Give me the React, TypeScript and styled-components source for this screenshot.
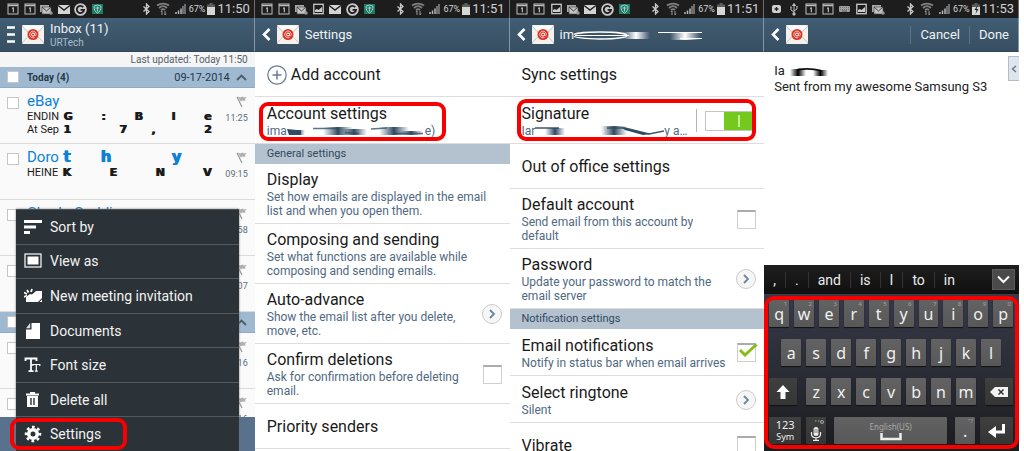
import React from "react";
import styled, { createGlobalStyle } from "styled-components";

const GlobalStyle = createGlobalStyle`
  *, *::before, *::after { box-sizing: border-box; }
  body { margin: 0; background: #fff; font-family: Roboto, "Liberation Sans", sans-serif; color: #1a1a1a; }
  button, input, textarea { font: inherit; color: inherit; margin: 0; }
  button { border: 0; padding: 0; background: none; text-align: left; }
  h1, h2, p { margin: 0; font-weight: 400; }
  svg { display: block; flex: none; }
`;

/* ---------- shell ---------- */

const Board = styled.main`
  display: grid;
  grid-template-columns: repeat(4, minmax(0, 1fr));
  height: 100vh;
  padding-right: 5px;
  overflow: hidden;
`;

const Phone = styled.section`
  position: relative;
  display: flex;
  flex-direction: column;
  min-height: 0;
  overflow: hidden;
  background: #fff;
`;

const Status = styled.div`
  flex: none;
  display: flex;
  align-items: center;
  height: 18px;
  padding: 0 4px;
  background: #1d1d1d;
  border-right: 1px solid #6d6d6d;
  color: #d2d2d2;
`;

const Slot = styled.span<{ $narrow?: boolean }>`
  display: flex;
  justify-content: center;
  width: ${(p) => (p.$narrow ? 12 : 17)}px;
`;

const StatusEnd = styled.div`
  display: flex;
  align-items: center;
  margin-left: auto;
`;

const Percent = styled.span`
  font-size: 9px;
  line-height: 18px;
`;

const Clock = styled.span`
  font-size: 13px;
  line-height: 18px;
`;

const Header = styled.header`
  flex: none;
  display: flex;
  align-items: center;
  gap: 6px;
  height: 34px;
  padding: 0 0 0 7px;
  background: linear-gradient(#41607a, #3f5a6f 20%, #384f63);
  border-right: 1px solid #8397a6;
  border-bottom: 1px solid #2f4759;
  color: #f0f3f5;
  font-size: 13px;
`;

const HeaderTitle = styled.h1`
  display: flex;
  align-items: center;
  font-size: 13px;
  line-height: 16px;
`;

const HeaderStack = styled.div`
  line-height: 15px;
`;

const Account = styled.p`
  font-size: 10px;
  line-height: 11px;
  color: #a9bccb;
`;

const IconButton = styled.button`
  display: flex;
`;

const HeaderAction = styled.button`
  height: 18px;
  padding: 0 9px;
  border-left: 1px solid #5a7387;
  font-size: 13px;
  line-height: 18px;
`;

const HeaderActions = styled.div`
  display: flex;
  margin-left: auto;
`;

const Highlight = styled.span<{ $inset: string; $radius?: number }>`
  position: absolute;
  inset: ${(p) => p.$inset};
  border: 4px solid #f80000;
  border-radius: ${(p) => p.$radius ?? 9}px;
  pointer-events: none;
`;

/* ---------- inbox ---------- */

const Updated = styled.p`
  flex: none;
  padding: 0 7px;
  background: #f5f5f5;
  color: #55606c;
  font-size: 10px;
  line-height: 15px;
  text-align: right;
`;

const DateBand = styled.div`
  flex: none;
  display: flex;
  align-items: center;
  height: 21px;
  padding: 0 8px 0 7px;
  background: #9fb9d1;
  border-bottom: 1px solid #8fabc4;
  color: #24384c;
  font-size: 11px;
`;

const DateLabel = styled.strong`
  margin-left: 8px;
  font-size: 10px;
  font-weight: 700;
`;

const DateValue = styled.span`
  margin: 0 6px 0 auto;
`;

const MailRow = styled.article`
  flex: none;
  display: flex;
  height: 56px;
  padding: 4px 7px 0 7px;
  background: #fafafa;
  border-bottom: 1px solid #dcdcdc;
`;

const MailCheck = styled.input.attrs({ type: "checkbox" })`
  appearance: none;
  flex: none;
  width: 12px;
  height: 12px;
  background: #fff;
  border: 1px solid #c6c6c6;
`;

const MailRowCheck = styled(MailCheck)`
  margin-top: 5px;
`;

const MailBody = styled.div`
  flex: 1;
  min-width: 0;
  margin-left: 8px;
  overflow: hidden;
`;

const Sender = styled.h2`
  display: flex;
  font-size: 15px;
  line-height: 18px;
  color: #0b82d6;
`;

const Subject = styled.p`
  display: flex;
  font-size: 11px;
  line-height: 13px;
  white-space: nowrap;
`;

/* letters pulled apart, with a slight sideways drag */
const Spread = styled.span<{ $large?: boolean }>`
  flex: 1;
  display: flex;
  justify-content: space-between;
  padding: 0 14px 0 4px;
  font-family: "DejaVu Sans", sans-serif;
  font-weight: 700;
  font-size: ${(p) => (p.$large ? 15 : 11)}px;
  text-shadow: 1px 0 currentColor;
`;

const MailMeta = styled.div`
  flex: none;
  display: flex;
  flex-direction: column;
  align-items: flex-end;
  padding-top: 3px;
  gap: 4px;
  color: #5c6c7c;
  font-size: 9px;
  line-height: 12px;
`;

const BottomBar = styled.div`
  position: absolute;
  inset: auto 0 0 0;
  height: 34px;
  background: #59718d;
`;

const Menu = styled.nav`
  position: absolute;
  right: 16px;
  bottom: 0;
  left: 16px;
  display: flex;
  flex-direction: column;
  height: 242px;
  background: #2b3238;
  border-top: 1px solid #4b5055;
  box-shadow: 0 0 2px #777;
`;

const MenuItem = styled.button`
  position: relative;
  flex: 1;
  display: flex;
  align-items: center;
  gap: 8px;
  padding-left: 8px;
  color: #f2f2f2;
  font-size: 14px;
  & + & { border-top: 1px solid #54595e; }
`;

/* ---------- settings ---------- */

const Section = styled.h2`
  flex: none;
  height: 20px;
  padding-left: 12px;
  background: #b4c2d0;
  color: #33495e;
  font-size: 11px;
  line-height: 20px;
`;

const Row = styled.div<{ $single?: boolean }>`
  position: relative;
  flex: none;
  display: flex;
  align-items: center;
  gap: 8px;
  min-height: ${(p) => (p.$single ? 45 : 47)}px;
  padding: 6px 8px 5px 12px;
  border-bottom: 1px solid #dedede;
`;

const AddRow = styled(Row)`
  gap: 4px;
`;

const RowText = styled.label`
  flex: 1;
  min-width: 0;
`;

const RowTitle = styled.span`
  display: block;
  font-size: 16px;
  line-height: 20px;
`;

const RowNote = styled.span`
  display: flex;
  color: #4f6981;
  font-size: 12px;
  line-height: 14px;
`;

const Check = styled.input.attrs({ type: "checkbox" })`
  appearance: none;
  flex: none;
  width: 19px;
  height: 19px;
  background: #fff;
  border: 1px solid #cfcfcf;
  border-top: 2px solid #ababab;
`;

const CheckBox = styled.span`
  position: relative;
  display: flex;
  svg { position: absolute; inset: 0 0 auto 0; pointer-events: none; }
`;

const Round = styled.button`
  flex: none;
  display: flex;
  align-items: center;
  justify-content: center;
  width: 20px;
  height: 20px;
  background: #f6f6f6;
  border: 1px solid #cbcbcb;
  border-radius: 50%;
`;

const Rule = styled.span`
  width: 1px;
  height: 23px;
  background: #b5b5b5;
`;

const Switch = styled.input.attrs({ type: "checkbox", role: "switch" })`
  appearance: none;
  flex: none;
  width: 48px;
  height: 20px;
  margin-right: 3px;
  border: 1px solid #c4c4c4;
  background:
    linear-gradient(#c4f090, #c4f090) 32px 3px / 2px 12px no-repeat,
    linear-gradient(90deg, #fff 18px, #75c81c 18px);
`;

/* ---------- signature editor ---------- */

const Editor = styled.div`
  position: relative;
  flex: 1;
  display: flex;
  min-height: 0;
`;

const Signature = styled.textarea`
  flex: 1;
  min-width: 0;
  padding: 11px 10px;
  border: 0;
  outline: 0;
  resize: none;
  overflow: hidden;
  background: #fff;
  color: #222;
  font-size: 13px;
  line-height: 16px;
`;

const EditorSmear = styled.span`
  position: absolute;
  top: 15px;
  left: 26px;
`;

const SideTab = styled.button`
  position: absolute;
  top: 4px;
  right: 0;
  display: flex;
  align-items: center;
  justify-content: center;
  width: 11px;
  height: 25px;
  background: #dde5ed;
  border: 1px solid #b4bcc6;
  border-right: 0;
`;

const Suggestions = styled.div`
  flex: none;
  display: flex;
  align-items: center;
  height: 30px;
  padding-right: 4px;
  background: linear-gradient(#1e1e1e, #101010);
  border-bottom: 1px solid #3b3d47;
  color: #ececec;
`;

const Suggestion = styled.button`
  height: 16px;
  padding: 0 9px;
  font-size: 14px;
  line-height: 16px;
  & + & { border-left: 1px solid #333; }
`;

const Collapse = styled.button`
  display: flex;
  align-items: center;
  justify-content: center;
  width: 23px;
  height: 21px;
  margin-left: auto;
  background: #4a4a4a;
  border: 1px solid #5a5a5a;
`;

const Keyboard = styled.div`
  position: relative;
  flex: none;
  display: flex;
  flex-direction: column;
  gap: 12px;
  padding: 5px 6px 7px 5px;
  background: linear-gradient(#363847, #2a2c36 50%, #1b1c1e);
  font-family: "Noto Sans", sans-serif;
`;

const KeyRow = styled.div<{ $gap?: number; $pad?: number; $grow?: number }>`
  flex: ${(p) => p.$grow ?? 1} 1 0;
  display: flex;
  gap: ${(p) => p.$gap ?? 5}px;
  padding: 0 ${(p) => p.$pad ?? 0}px;
`;

const Key = styled.button<{ $grow?: number; $dark?: boolean }>`
  position: relative;
  flex: ${(p) => p.$grow ?? 20} 1 0;
  min-width: 0;
  display: flex;
  flex-direction: column;
  align-items: center;
  justify-content: center;
  height: 27px;
  border-radius: 1px;
  background: ${(p) => (p.$dark ? "linear-gradient(#3f3f40, #353536)" : "linear-gradient(#626262, #585858)")};
  box-shadow: 0 1px 1px #111;
  color: #f0f0f0;
  font-size: 16px;
  line-height: 20px;
`;

const Hint = styled.sup`
  position: absolute;
  top: 1px;
  right: 2px;
  color: #a2a2a2;
  font-size: 6px;
  line-height: 7px;
`;

const KeySmall = styled.span<{ $muted?: boolean }>`
  color: ${(p) => (p.$muted ? "#a8a8a8" : "#ededed")};
  font-size: ${(p) => (p.$muted ? 8 : 9)}px;
  line-height: 11px;
`;

const KeyNumber = styled.span`
  font-size: 11px;
  line-height: 12px;
`;

/* ---------- drawings ---------- */

const Calendar = () => (
  <svg width="12" height="12" viewBox="0 0 12 12">
    <rect x="1" y="1" width="10" height="10" fill="none" stroke="#bdbdbd" />
    <path d="M1 2.5h10" stroke="#bdbdbd" strokeWidth="1.5" />
    <path d="M5 5.5l1.3-.8v4.6" fill="none" stroke="#d8d8d8" />
  </svg>
);
const Mails = () => (
  <svg width="13" height="11" viewBox="0 0 13 11">
    <rect x="0" y="1" width="9" height="7" fill="#a9a9a9" />
    <rect x="2" y="3" width="9" height="7" fill="#c2c2c2" stroke="#444" strokeWidth=".6" />
    <path d="M2 3l4.5 4L11 3" fill="none" stroke="#444" />
    <circle cx="11" cy="9" r="1.7" fill="#999" />
  </svg>
);
const Mail = () => (
  <svg width="12" height="9" viewBox="0 0 12 9">
    <rect width="12" height="9" fill="#d4d4d4" />
    <path d="M0 .5l6 4.5 6-4.5" fill="none" stroke="#222" strokeWidth="1.4" />
  </svg>
);
const Picture = () => (
  <svg width="11" height="12" viewBox="0 0 11 12">
    <rect x=".8" y="1.3" width="9.4" height="9.4" fill="none" stroke="#ccc" strokeWidth="1.3" />
    <path d="M2 9V7l2-1 1.5 1L9 4v5z" fill="#ccc" />
  </svg>
);
const Ring = () => (
  <svg width="13" height="13" viewBox="0 0 13 13">
    <circle cx="6.5" cy="6.5" r="6.3" fill="#c9c9c9" />
    <path d="M9.2 4.2A3.6 3.6 0 1 0 10 6.9H6.6" fill="none" stroke="#1d1d1d" strokeWidth="1.8" />
  </svg>
);
const Shield = () => (
  <svg width="11" height="12" viewBox="0 0 11 12">
    <rect y="1" width="11" height="10" fill="#1f7a66" />
    <path d="M5.5 2L9 3.2c0 3.5-1 5.3-3.5 7C3 8.5 2 6.7 2 3.2z" fill="none" stroke="#9fd0c2" />
    <path d="M3.5 5h4M5.5 3.5v5" stroke="#9fd0c2" />
  </svg>
);
const Plus = () => (
  <svg width="10" height="10" viewBox="0 0 10 10">
    <rect y="1" width="9" height="8" rx="2" fill="#cfcfcf" />
    <path d="M4.5 3v4M2.5 5h4" stroke="#222" strokeWidth="1.3" />
  </svg>
);
const Usb = () => (
  <svg width="10" height="13" viewBox="0 0 10 13" fill="none" stroke="#bbb">
    <path d="M5 1v10M5 9L2 7V4M5 8l3-2V4" />
    <circle cx="5" cy="11" r="1.2" fill="#bbb" />
    <path d="M3.5 2.5L5 .5l1.5 2zM7.3 3.5h1.4M1.3 4h1.4" fill="#bbb" />
  </svg>
);
const Keys = () => (
  <svg width="11" height="6" viewBox="0 0 11 6">
    <rect width="11" height="6" rx="1" fill="#a0a0a0" />
    <path d="M1 1.5h9M1 3.5h9" stroke="#555" strokeWidth=".6" strokeDasharray="1 1" />
    <path d="M3 5h5" stroke="#444" strokeWidth=".8" />
  </svg>
);
const Bluetooth = () => (
  <svg width="9" height="12" viewBox="0 0 9 12">
    <path d="M1.5 3.5l5.5 5L4.5 11V1L7 3.5l-5.5 5" fill="none" stroke="#c9c9c9" strokeWidth="1.3" />
  </svg>
);
const Wifi = () => (
  <svg width="14" height="14" viewBox="0 0 14 14" fill="none" stroke="#7d7d7d">
    <path d="M1 3.5C4.5 1 9.5 1 13 3.5" strokeWidth="2" />
    <path d="M3 6c2.5-2.3 5.5-2.3 8 0M5 8c1.3-1.2 2.7-1.2 4 0" strokeWidth="1.8" />
    <path d="M6 9v4M5 10l1-1.5M9 9v4M9 13l1-1.5" stroke="#999" />
  </svg>
);
const Signal = () => (
  <svg width="11" height="12" viewBox="0 0 11 12">
    <path d="M1 11V9M3.5 11V7.5M6 11V5.5" stroke="#b5b5b5" strokeWidth="1.5" />
    <path d="M8 11V3M10 11V1" stroke="#a2a2a2" strokeWidth="1.2" />
  </svg>
);
const Battery = ({ charging }: { charging?: boolean }) => (
  <svg width="8" height="12" viewBox="0 0 8 12">
    <path d="M2.5 0h3v1.5H8V12H0V1.5h2.5z" fill="#5e5e5e" />
    <path d="M0 4h8v8H0z" fill="#d6d6d6" />
    {charging && <path d="M5 3L2.5 7h2L3.5 11l3-5h-2L5.5 3z" fill="#222" />}
  </svg>
);

const Envelope = () => (
  <svg width="22" height="19" viewBox="0 0 22 19">
    <rect width="22" height="19" rx="1" fill="#f4f1ef" />
    <path d="M0 1l8 8.5L0 18M22 1l-8 8.5 8 8.5" fill="none" stroke="#c9c5c2" />
    <path d="M1 1h20l-10 8z" fill="#fff" />
    <circle cx="11" cy="9.5" r="5.5" fill="#dc3423" />
    <circle cx="11" cy="9.5" r="1.5" fill="none" stroke="#fff" />
    <path d="M12.5 8v2.5c.6 1 1.8.3 1.8-1A3.3 3.3 0 1 0 12.5 12.4" fill="none" stroke="#ffe3df" strokeWidth=".8" />
  </svg>
);
const Burger = () => (
  <svg width="9" height="17" viewBox="0 0 9 17">
    <path d="M0 1.5h8M0 8.5h8M0 15.5h8" stroke="#fff" strokeWidth="2.4" />
  </svg>
);
const Back = () => (
  <svg width="9" height="13" viewBox="0 0 9 13">
    <path d="M7.5 1L2 6.5 7.5 12" fill="none" stroke="#fff" strokeWidth="2.6" />
  </svg>
);
const Up = () => (
  <svg width="11" height="7" viewBox="0 0 11 7">
    <path d="M1 6l4.5-4.5L10 6" fill="none" stroke="#4b5b69" strokeWidth="1.8" />
  </svg>
);
const Flag = () => (
  <svg width="12" height="13" viewBox="0 0 12 13">
    <path d="M1 1.5l3 1 3-1 1 1 3-.5-2 2 .5 2-3-.5-1.5 1z" fill="#b0b0b0" />
    <path d="M1 2l5 10" stroke="#9c9c9c" strokeWidth="1.2" />
  </svg>
);
const Chevron = () => (
  <svg width="8" height="10" viewBox="0 0 8 10">
    <path d="M2 1l4 4-4 4" fill="none" stroke="#6f8598" strokeWidth="1.8" />
  </svg>
);
const Tick = () => (
  <svg width="22" height="15" viewBox="0 0 22 15">
    <path d="M3 7l5 5L19.5 1.5" fill="none" stroke="#86bc16" strokeWidth="3" />
  </svg>
);
const AddCircle = () => (
  <svg width="20" height="20" viewBox="0 0 20 20" fill="none" stroke="#647b92">
    <circle cx="10" cy="10" r="9.2" strokeWidth="1.2" />
    <path d="M10 5.5v9M5.5 10h9" strokeWidth="1.5" />
  </svg>
);

const menuIcons: Record<string, React.ReactNode> = {
  "Sort by": <path d="M0 3.5h18M0 9h12M0 14.5h6" stroke="#fff" strokeWidth="3" />,
  "View as": (
    <>
      <rect x="1" y="2" width="16" height="13" fill="none" stroke="#eee" strokeWidth="1.3" />
      <rect x="3.5" y="4.5" width="11" height="8" fill="#fff" />
    </>
  ),
  "New meeting invitation": (
    <>
      <path d="M2 15V10l4-3 2 .5L12 4h6v7l-4 4z" fill="#fff" />
      <path d="M18 12.5V15h-2.500z" fill="#fff" />
      <path d="M0 5.5l3 1.500M3 3l1.500 2.500M8 2L7 5M0 10l3-1.500" stroke="#fff" strokeWidth="1.8" />
    </>
  ),
  Documents: (
    <>
      <path d="M7.5 1H16v16H2V7.5h5.500z" fill="#fff" />
      <path d="M6.2 1v5.200H2z" fill="#ddd" />
    </>
  ),
  "Font size": (
    <>
      <path d="M1.5 5V2.5h11V5M7 2.5V15M4.5 15.200h5" fill="none" stroke="#fff" strokeWidth="1.8" />
      <path d="M8.8 10V8.5h7V10M12.3 8.5V15M10.8 15.200h3" fill="none" stroke="#fff" strokeWidth="1.2" />
    </>
  ),
  "Delete all": (
    <>
      <path d="M2 3.5h13M6 2h5" stroke="#fff" strokeWidth="2" />
      <path d="M3 5h11v11H3z" fill="#fff" />
      <path d="M7 7v7M10 7v7" stroke="#2b3238" strokeWidth="1.4" />
    </>
  ),
  Settings: (
    <>
      <circle cx="9" cy="9" r="4.3" fill="none" stroke="#fff" strokeWidth="3.6" />
      <circle cx="9" cy="9" r="7" fill="none" stroke="#fff" strokeWidth="2.5" strokeDasharray="2.75 2.75" strokeDashoffset="1.3" />
    </>
  ),
};

/* horizontal scrubbed-out patches over private text */
const Defs = styled.svg`
  position: absolute;
`;
const SmearDefs = () => (
  <Defs width="0" height="0" aria-hidden="true">
    <defs>
      <linearGradient id="ink">
        <stop offset="0" stopColor="#3c566e" stopOpacity="0" />
        <stop offset=".5" stopColor="#2f4960" />
        <stop offset="1" stopColor="#3c566e" stopOpacity="0" />
      </linearGradient>
      <linearGradient id="chalk">
        <stop offset="0" stopColor="#fff" stopOpacity="0" />
        <stop offset=".5" stopColor="#fff" />
        <stop offset="1" stopColor="#fff" stopOpacity="0" />
      </linearGradient>
      <linearGradient id="coal">
        <stop offset="0" stopColor="#000" stopOpacity="0" />
        <stop offset=".5" stopColor="#000" />
        <stop offset="1" stopColor="#000" stopOpacity="0" />
      </linearGradient>
    </defs>
  </Defs>
);
const AccountSmear = () => (
  <svg width="138" height="14" viewBox="0 0 138 14">
    <path d="M0 5l10 1h4v5H2z" fill="#2f4960" />
    <rect x="4" y="6" width="14" height="5" fill="url(#ink)" />
    <path d="M26 4.5h26M58 8.5l14 1M84 5l16-1M106 9.5h30" stroke="#5c748a" strokeWidth="1.5" />
    <rect x="36" y="3" width="30" height="8" fill="url(#ink)" />
    <rect x="54" y="5" width="26" height="6" fill="url(#ink)" />
    <rect x="92" y="3" width="30" height="8" fill="url(#ink)" />
    <rect x="112" y="7" width="24" height="4" fill="url(#ink)" />
  </svg>
);
const TitleSmear = () => (
  <svg width="130" height="12" viewBox="0 0 130 12">
    <ellipse cx="26" cy="6.5" rx="27" ry="3.5" fill="none" stroke="#fff" strokeWidth="1.3" />
    <path d="M1 6.5h54" stroke="#fff" />
    <rect x="48" y="3" width="28" height="7" fill="url(#chalk)" />
    <path d="M84 3.5h44M106 9.5h22" stroke="#fff" strokeWidth="1.2" />
    <rect x="96" y="3" width="30" height="8" fill="url(#chalk)" />
  </svg>
);
const SignatureSmear = () => (
  <svg width="129" height="14" viewBox="0 0 129 14">
    <path d="M0 4h24M72 4h18l24 6 15-3" fill="none" stroke="#3c566e" strokeWidth="1.5" />
    <rect x="10" y="4" width="20" height="7" fill="url(#ink)" />
    <rect x="66" y="2" width="26" height="9" fill="url(#ink)" />
    <path d="M86 3l20 5 10 2-8 1-18-5z" fill="#2f4960" />
  </svg>
);
const NameSmear = () => (
  <svg width="38" height="10" viewBox="0 0 38 10">
    <path d="M8 2.5c7-1 15-1 23 1" fill="none" stroke="#111" strokeWidth="1.8" />
    <rect x="0" y="2" width="16" height="7" fill="url(#coal)" />
    <rect x="23" y="3" width="15" height="6" fill="url(#coal)" />
  </svg>
);

/* ---------- composed parts ---------- */

function StatusBar({ icons, time, charging }: { icons: React.ReactNode[]; time: string; charging?: boolean }) {
  return (
    <Status>
      {icons.map((icon, i) => (
        <Slot key={i}>{icon}</Slot>
      ))}
      <StatusEnd>
        <Slot><Bluetooth /></Slot>
        <Slot><Wifi /></Slot>
        <Slot><Signal /></Slot>
        <Percent>67%</Percent>
        <Slot $narrow><Battery charging={charging} /></Slot>
        <Clock>{time}</Clock>
      </StatusEnd>
    </Status>
  );
}

function SettingRow({ id, title, note, control }: { id: string; title: string; note?: React.ReactNode; control?: React.ReactNode }) {
  return (
    <Row $single={!note}>
      <RowText htmlFor={id}>
        <RowTitle>{title}</RowTitle>
        {note && <RowNote>{note}</RowNote>}
      </RowText>
      {control}
    </Row>
  );
}

function Mailing({ sender, time, children }: { sender: React.ReactNode; time: string; children?: React.ReactNode }) {
  return (
    <MailRow>
      <MailRowCheck aria-label="Select message" />
      <MailBody>
        <Sender>{sender}</Sender>
        {children}
      </MailBody>
      <MailMeta>
        <Flag />
        {time}
      </MailMeta>
    </MailRow>
  );
}

const spread = (letters: string[], large?: boolean) => (
  <Spread $large={large}>
    {letters.map((l, i) => (
      <span key={i}>{l}</span>
    ))}
  </Spread>
);

const Go = ({ id, label }: { id: string; label: string }) => (
  <Round id={id} aria-label={label}><Chevron /></Round>
);

export default function App() {
  return (
    <>
      <GlobalStyle />
      <SmearDefs />
      <Board>
        <Phone>
          <StatusBar icons={[<Calendar />, <Calendar />, <Mails />, <Mail />, <Ring />, <Shield />]} time="11:50" />
          <Header>
            <IconButton aria-label="Folders"><Burger /></IconButton>
            <Envelope />
            <HeaderStack>
              <HeaderTitle>Inbox (11)</HeaderTitle>
              <Account>URTech</Account>
            </HeaderStack>
          </Header>
          <Updated>Last updated: Today 11:50</Updated>
          <DateBand>
            <MailCheck aria-label="Select today" />
            <DateLabel>Today (4)</DateLabel>
            <DateValue>09-17-2014</DateValue>
            <Up />
          </DateBand>
          <Mailing sender="eBay" time="11:25">
            <Subject>ENDIN{spread(["G", ":", "B", "l", "e"])}</Subject>
            <Subject>At Sep{spread(["1", "", "7", ",", "", "2"])}</Subject>
          </Mailing>
          <Mailing sender={<>Doro{spread(["t", "h", "", "y", ""], true)}</>} time="09:15">
            <Subject>HEINE{spread(["K", "E", "N", "V"])}</Subject>
          </Mailing>
          <Mailing sender="Charla Gaddi" time="08:58" />
          <Mailing sender="" time="08:07" />
          <DateBand>
            <MailCheck aria-label="Select yesterday" />
            <DateValue />
            <Up />
          </DateBand>
          <Mailing sender="" time="07:16" />
          <Mailing sender="" time="07:16" />
          <BottomBar />
          <Menu>
            {Object.keys(menuIcons).map((name) => (
              <MenuItem key={name}>
                <svg width="18" height="18" viewBox="0 0 18 18">{menuIcons[name]}</svg>
                {name}
                {name === "Settings" && <Highlight $inset="1px 112px 1px -6px" />}
              </MenuItem>
            ))}
          </Menu>
        </Phone>

        <Phone>
          <StatusBar
            icons={[<Calendar />, <Calendar />, <Mails />, <Picture />, <Mail />, <Ring />, <Shield />]}
            time="11:51"
          />
          <Header>
            <IconButton aria-label="Back"><Back /></IconButton>
            <Envelope />
            <HeaderTitle>Settings</HeaderTitle>
          </Header>
          <AddRow $single>
            <AddCircle />
            <RowTitle>Add account</RowTitle>
          </AddRow>
          <Row>
            <RowText as="div">
              <RowTitle>Account settings</RowTitle>
              <RowNote>ima<AccountSmear />e)</RowNote>
            </RowText>
            <Highlight $inset="5px 64px 2px 4px" />
          </Row>
          <Section>General settings</Section>
          <SettingRow id="display" title="Display" note="Set how emails are displayed in the email list and when you open them." />
          <SettingRow id="composing" title="Composing and sending" note="Set what functions are available while composing and sending emails." />
          <SettingRow
            id="advance"
            title="Auto-advance"
            note="Show the email list after you delete, move, etc."
            control={<Go id="advance" label="Auto-advance" />}
          />
          <SettingRow
            id="confirm"
            title="Confirm deletions"
            note="Ask for confirmation before deleting email."
            control={<Check id="confirm" />}
          />
          <SettingRow id="priority" title="Priority senders" />
        </Phone>

        <Phone>
          <StatusBar
            icons={[<Calendar />, <Calendar />, <Picture />, <Mails />, <Mail />, <Ring />, <Shield />]}
            time="11:51"
          />
          <Header>
            <IconButton aria-label="Back"><Back /></IconButton>
            <Envelope />
            <HeaderTitle>im<TitleSmear /></HeaderTitle>
          </Header>
          <SettingRow id="sync" title="Sync settings" />
          <Row>
            <RowText htmlFor="signature">
              <RowTitle>Signature</RowTitle>
              <RowNote>Iar<SignatureSmear />y a…</RowNote>
            </RowText>
            <Rule />
            <Switch id="signature" defaultChecked />
            <Highlight $inset="2px 8px 2px 7px" />
          </Row>
          <SettingRow id="office" title="Out of office settings" />
          <SettingRow
            id="default"
            title="Default account"
            note="Send email from this account by default"
            control={<Check id="default" />}
          />
          <SettingRow
            id="password"
            title="Password"
            note="Update your password to match the email server"
            control={<Go id="password" label="Password" />}
          />
          <Section>Notification settings</Section>
          <SettingRow
            id="notify"
            title="Email notifications"
            note="Notify in status bar when email arrives"
            control={<CheckBox><Check id="notify" defaultChecked /><Tick /></CheckBox>}
          />
          <SettingRow id="ringtone" title="Select ringtone" note="Silent" control={<Go id="ringtone" label="Select ringtone" />} />
          <SettingRow id="vibrate" title="Vibrate" control={<Check id="vibrate" />} />
        </Phone>

        <Phone>
          <StatusBar
            icons={[<Plus />, <Usb />, <Calendar />, <Calendar />, <Keys />, <Picture />, <Mails />]}
            time="11:53"
            charging
          />
          <Header>
            <IconButton aria-label="Back"><Back /></IconButton>
            <Envelope />
            <HeaderActions>
              <HeaderAction>Cancel</HeaderAction>
              <HeaderAction>Done</HeaderAction>
            </HeaderActions>
          </Header>
          <Editor>
            <Signature aria-label="Signature" defaultValue={"Ia\nSent from my awesome Samsung S3"} />
            <EditorSmear><NameSmear /></EditorSmear>
            <SideTab aria-label="Open panel">
              <svg width="6" height="8" viewBox="0 0 6 8">
                <path d="M5 1L1.5 4 5 7" fill="none" stroke="#5f7488" strokeWidth="1.3" />
              </svg>
            </SideTab>
          </Editor>
          <Suggestions>
            {[",", ".", "and", "is", "I", "to", "in"].map((w) => (
              <Suggestion key={w}>{w}</Suggestion>
            ))}
            <Collapse aria-label="More suggestions">
              <svg width="13" height="9" viewBox="0 0 13 9">
                <path d="M1 1.5l5.5 5.5L12 1.5" fill="none" stroke="#fff" strokeWidth="2" />
              </svg>
            </Collapse>
          </Suggestions>
          <Keyboard>
            <KeyRow>
              {"qwertyuiop".split("").map((k, i) => (
                <Key key={k}>{k}<Hint>{(i + 1) % 10}</Hint></Key>
              ))}
            </KeyRow>
            <KeyRow $pad={12}>
              {"asdfghjkl".split("").map((k) => <Key key={k}>{k}</Key>)}
            </KeyRow>
            <KeyRow $gap={9}>
              <Key $grow={28} $dark aria-label="Shift">
                <svg width="14" height="16" viewBox="0 0 14 16">
                  <path d="M7 1l6.5 7H9.5v7h-5V8H.5z" fill="#fff" />
                </svg>
              </Key>
              <KeyRow $grow={170}>
                {"zxcvbnm".split("").map((k) => <Key key={k}>{k}</Key>)}
              </KeyRow>
              <Key $grow={28} $dark aria-label="Backspace">
                <svg width="18" height="10" viewBox="0 0 18 10">
                  <path d="M5 0h13v10H5L0 5z" fill="#f2f2f2" />
                  <path d="M8.5 2.5l5 5M13.5 2.5l-5 5" stroke="#333" strokeWidth="1.5" />
                </svg>
              </Key>
            </KeyRow>
            <KeyRow $gap={8}>
              <KeyRow $grow={57}>
                <Key $grow={32} $dark>
                  <KeyNumber>123</KeyNumber>
                  <KeySmall>Sym</KeySmall>
                </Key>
                <Key $dark aria-label="Voice input">
                  <svg width="18" height="25" viewBox="0 0 18 25">
                    <path d="M8 3h1.5M11 3h1.5" stroke="#aaa" />
                    <circle cx="15" cy="4" r="1.5" fill="none" stroke="#aaa" />
                    <rect x="6.5" y="9" width="5" height="9" rx="2.5" fill="#eee" />
                    <path d="M6.5 12h5M6.5 14h5" stroke="#444" strokeWidth=".7" />
                    <path d="M4.5 14v2c0 5 9 5 9 0v-2M9 19.5V22M6 22.3h6" fill="none" stroke="#eee" strokeWidth="1.2" />
                  </svg>
                </Key>
              </KeyRow>
              <Key $grow={113} aria-label="Space">
                <KeySmall $muted>English(US)</KeySmall>
                <svg width="22" height="9" viewBox="0 0 22 9">
                  <path d="M1.5 1v6h19V1" fill="none" stroke="#eee" strokeWidth="2.5" />
                </svg>
              </Key>
              <KeyRow $grow={58}>
                <Key>.<Hint>"?</Hint></Key>
                <Key $grow={33} $dark aria-label="Enter">
                  <svg width="18" height="15" viewBox="0 0 18 15">
                    <path d="M15.5 1v8H6" fill="none" stroke="#fff" strokeWidth="3" />
                    <path d="M8 3v12L0 9z" fill="#fff" />
                  </svg>
                </Key>
              </KeyRow>
            </KeyRow>
            <Highlight $inset="1px 0 2px 0" $radius={10} />
          </Keyboard>
        </Phone>
      </Board>
    </>
  );
}
